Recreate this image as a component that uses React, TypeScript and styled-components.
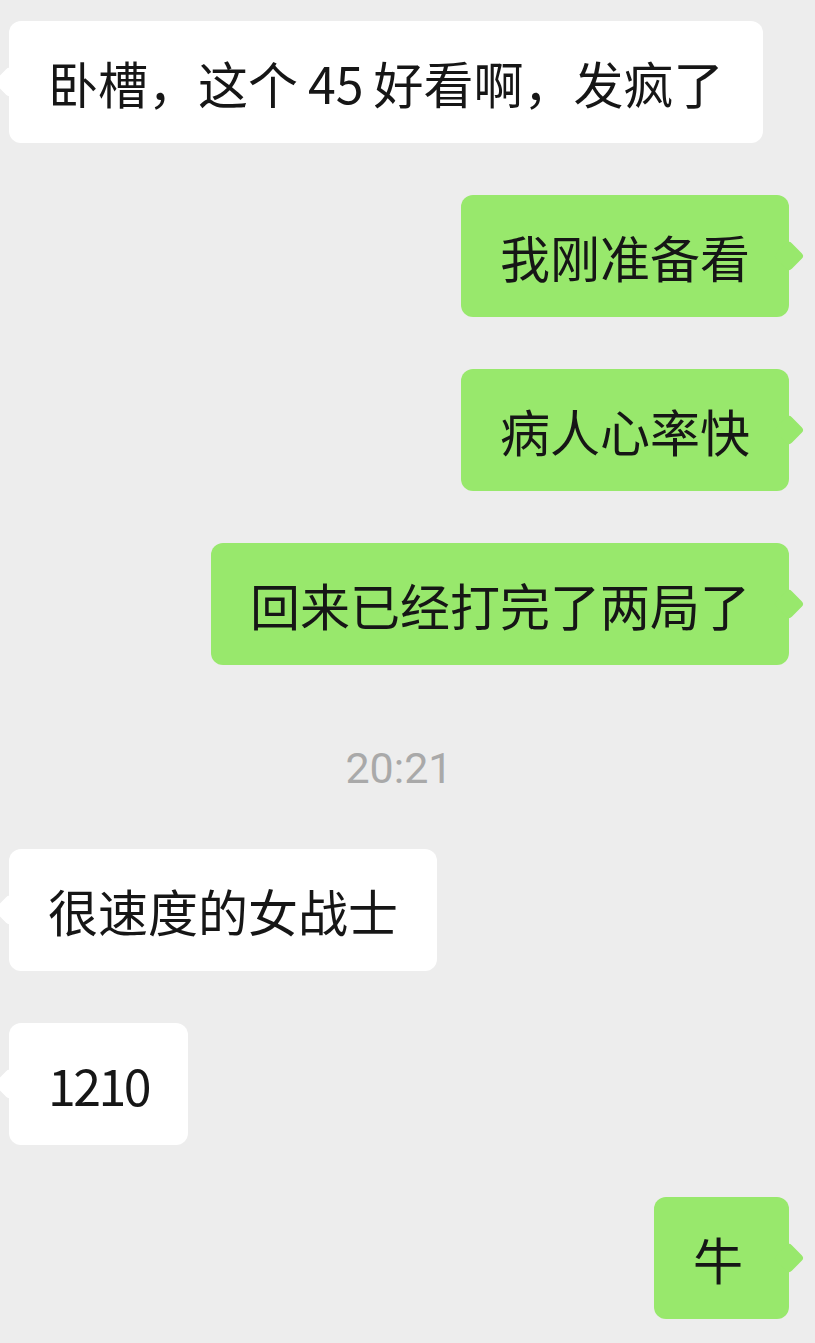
import styled, { createGlobalStyle, css } from 'styled-components';

const GlobalStyle = createGlobalStyle`
  html, body {
    margin: 0;
    padding: 0;
    background: #ededed;
  }
  body {
    font-family: "Noto Sans CJK SC", "Noto Sans", sans-serif;
  }
`;

const Screen = styled.main`
  width: 815px;
  min-height: 1343px;
  box-sizing: border-box;
  padding: 21px 26px 0 9px;
  background: #ededed;
  overflow: hidden;
  display: flex;
  flex-direction: column;
  gap: 52px;
`;

const Row = styled.div<{ $mine?: boolean }>`
  display: flex;
  justify-content: ${({ $mine }) => ($mine ? 'flex-end' : 'flex-start')};
`;

const Bubble = styled.div<{ $mine?: boolean }>`
  position: relative;
  box-sizing: border-box;
  min-width: 135px;
  padding: 26px 39px;
  border-radius: 12px;
  font-size: 50px;
  line-height: 70px;
  color: #161616;
  white-space: nowrap;
  background: ${({ $mine }) => ($mine ? '#98e86c' : '#ffffff')};

  &::before {
    content: '';
    position: absolute;
    top: 50%;
    width: 22px;
    height: 22px;
    border-radius: 4px;
    background: inherit;
    transform: translate(-50%, -50%) rotate(45deg);
    ${({ $mine }) =>
      $mine
        ? css`
            left: 100%;
          `
        : css`
            left: 0;
          `}
  }
`;

// latin runs inside chinese text get a little air, like the phone does
const Latin = styled.span<{ $inline?: boolean }>`
  ${({ $inline }) =>
    $inline
      ? css`
          margin: 0 10px;
        `
      : css`
          letter-spacing: -2.5px;
        `}
`;

const Stamp = styled.div`
  margin: 26px 0 4px;
  text-align: center;
  font-family: Roboto, "Liberation Sans", sans-serif;
  font-size: 43px;
  line-height: 50px;
  color: #a9a9a9;
`;

const App = () => {
  return (
    <>
      <GlobalStyle />
      <Screen>
        <Row>
          <Bubble>
            卧槽，这个<Latin $inline>45</Latin>好看啊，发疯了
          </Bubble>
        </Row>
        <Row $mine>
          <Bubble $mine>我刚准备看</Bubble>
        </Row>
        <Row $mine>
          <Bubble $mine>病人心率快</Bubble>
        </Row>
        <Row $mine>
          <Bubble $mine>回来已经打完了两局了</Bubble>
        </Row>
        <Stamp>20:21</Stamp>
        <Row>
          <Bubble>很速度的女战士</Bubble>
        </Row>
        <Row>
          <Bubble>
            <Latin>1210</Latin>
          </Bubble>
        </Row>
        <Row $mine>
          <Bubble $mine>牛</Bubble>
        </Row>
      </Screen>
    </>
  );
};

export default App;
